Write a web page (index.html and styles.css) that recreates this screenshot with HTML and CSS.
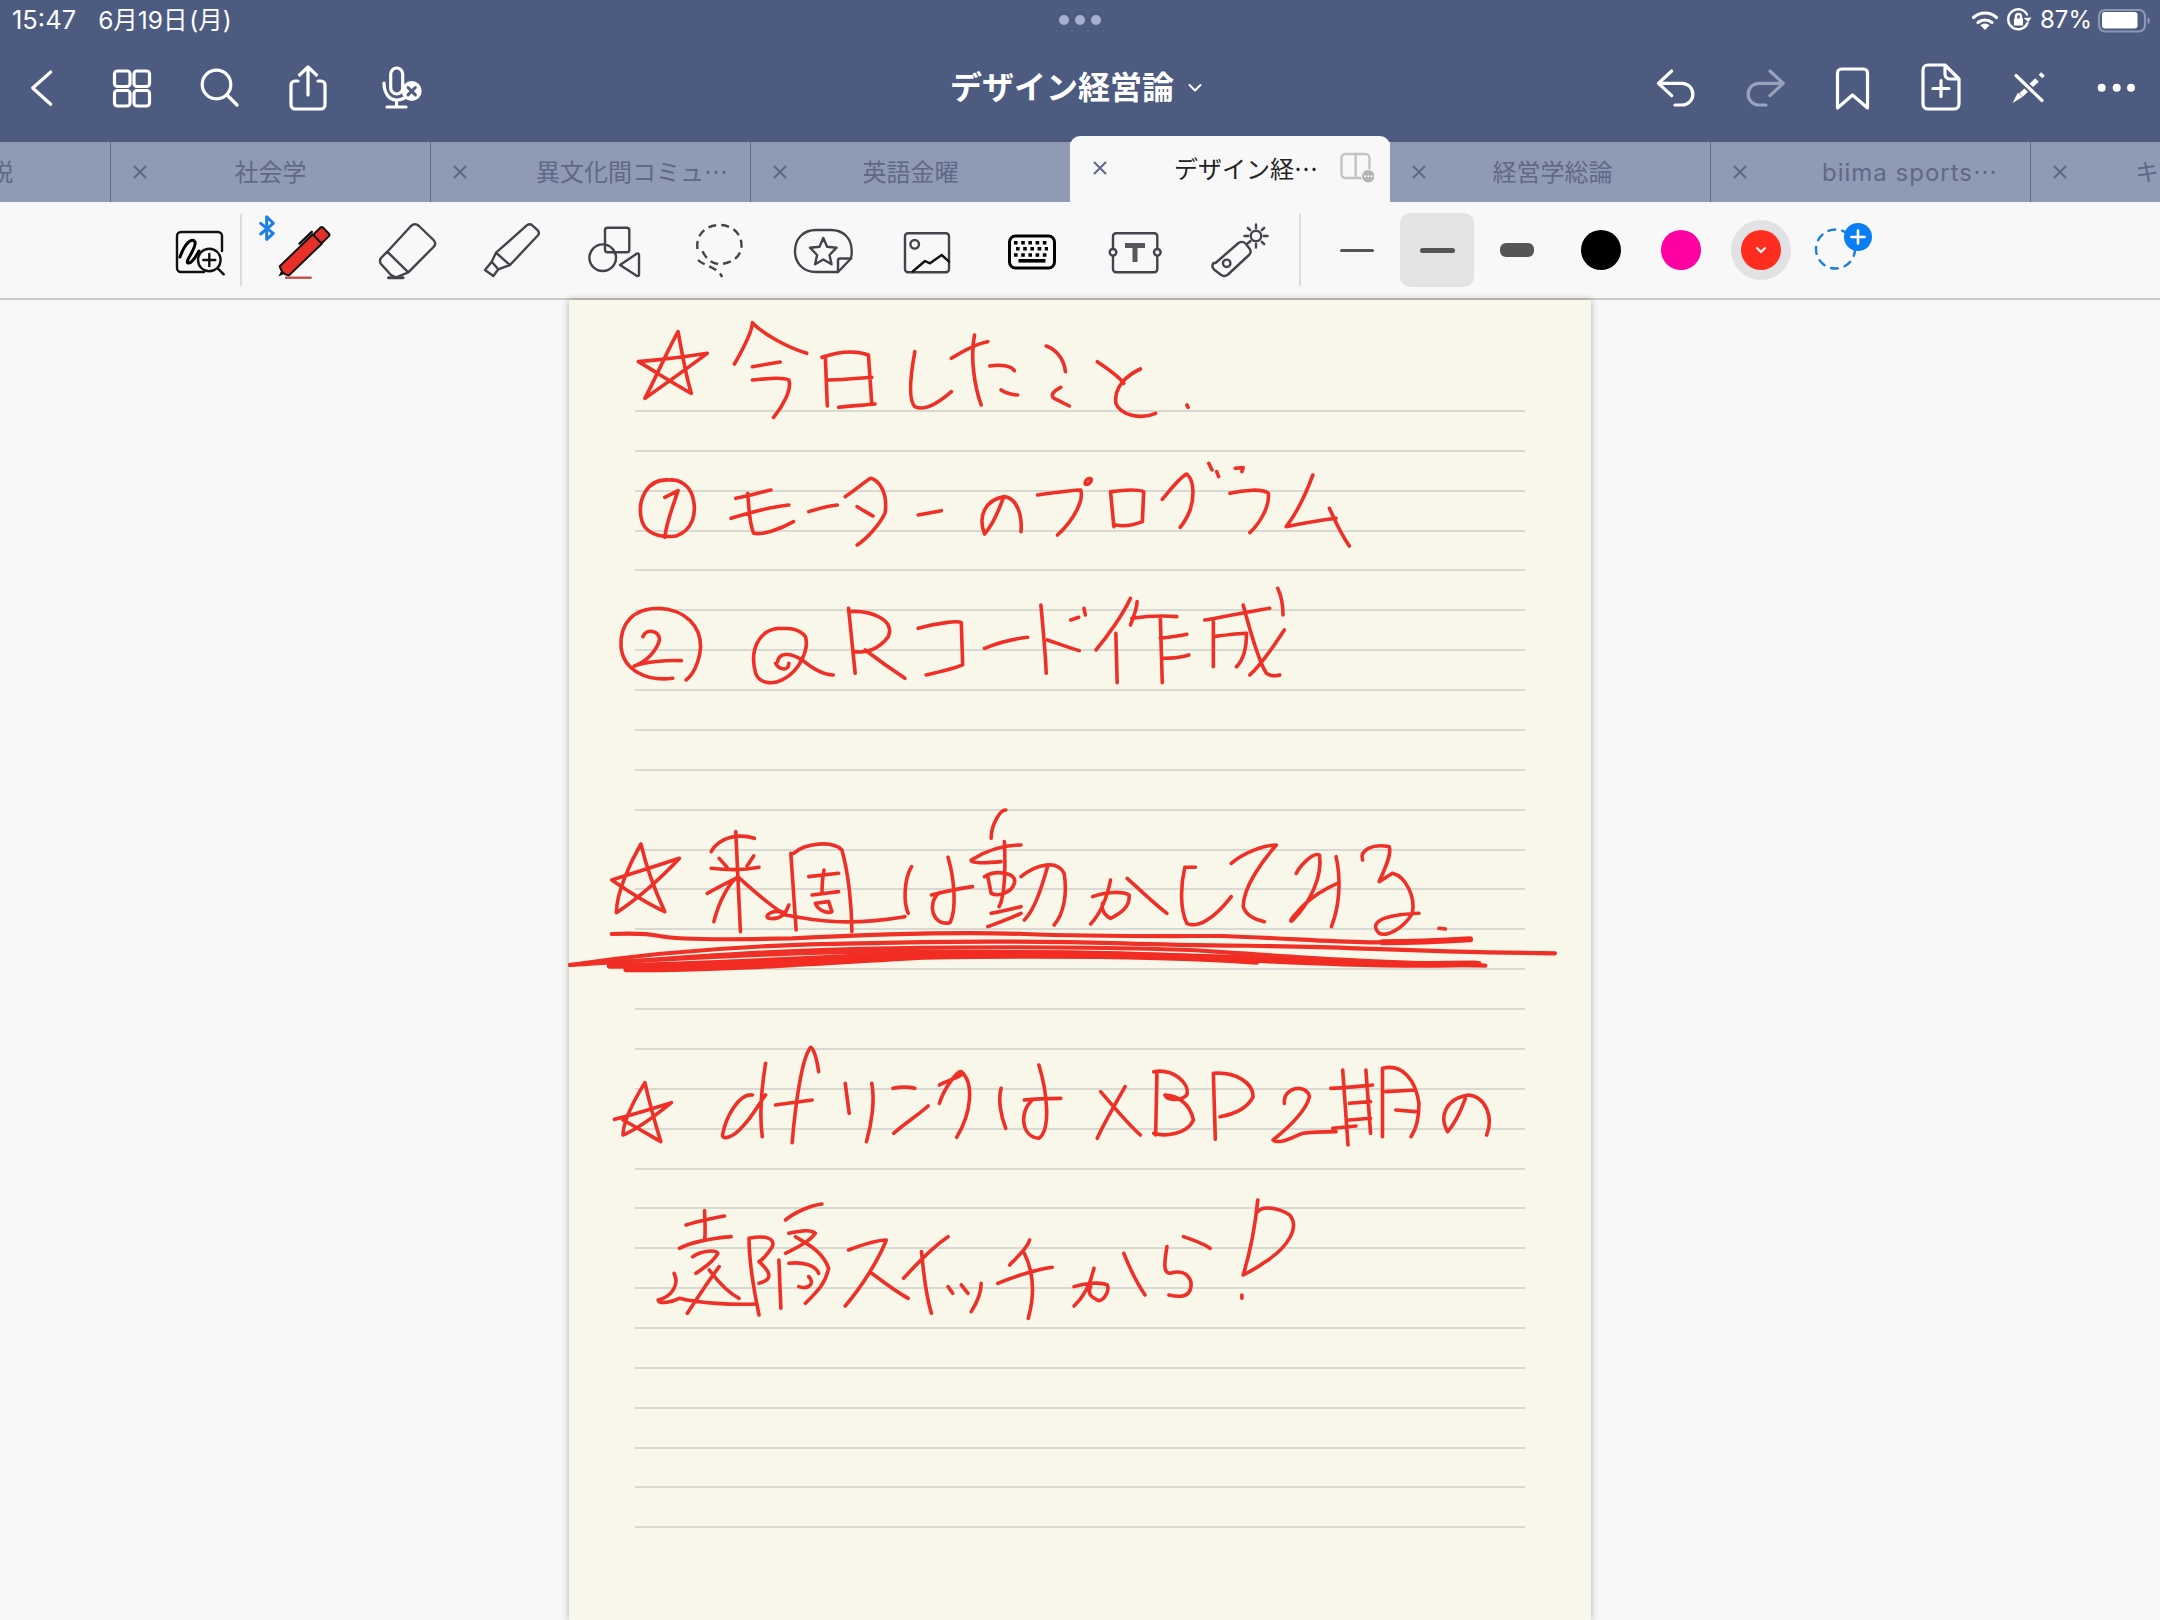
FILE: index.html
```html
<!DOCTYPE html>
<html lang="ja">
<head>
<meta charset="utf-8">
<title>デザイン経営論</title>
<link rel="stylesheet" href="styles.css">
</head>
<body>
<div class="app">
  <header class="header">
    <div class="status">
      <div class="status-left"><span>15:47</span><span class="date">6月19日 (月)</span></div>
      <div class="handle"><i></i><i></i><i></i></div>
      <div class="status-right">
        <svg class="ico" width="190" height="40" viewBox="1970 0 190 40">
          <path d="M1973.5 17.5a17 17 0 0 1 23 0M1978 22.5a11 11 0 0 1 14 0"/>
          <path class="solid" d="M1985 30l-4.600-4.800a7 7 0 0 1 9.200 0z"/>
          <path class="thin" d="M2027.500 23a10 10 0 1 1-.5-8.500"/>
          <path class="solid" d="M2023.500 18l5 4 3-4.500zM2014 18.500h9v7h-9z"/>
          <path class="thin" d="M2016 18.500v-2a2.500 2.500 0 0 1 5 0v2"/>
          <rect class="batt" x="2099" y="10" width="46" height="21.500" rx="6"/>
          <rect class="solid" x="2102" y="12" width="35.500" height="16.500" rx="3"/>
          <path class="batt-tail" d="M2147.500 17v7a4 4 0 0 0 2.500-3.500 4 4 0 0 0-2.500-3.500z"/>
        </svg>
        <span class="pct">87%</span>
      </div>
    </div>
    <nav class="nav">
      <div class="nav-group">
        <svg class="ico" width="86" height="96" viewBox="0 40 86 96"><path d="M50.700 72L32.700 88l18 16.300"/></svg>
        <svg class="ico" width="90" height="96" viewBox="86 40 90 96"><rect x="114.500" y="71" width="15.500" height="15.500" rx="3"/><rect x="134" y="71" width="15.500" height="15.500" rx="3"/><rect x="114.500" y="90.500" width="15.500" height="15.500" rx="3"/><rect x="134" y="90.500" width="15.500" height="15.500" rx="3"/></svg>
        <svg class="ico" width="90" height="96" viewBox="176 40 90 96"><circle cx="216.500" cy="84.500" r="14.300"/><path d="M227 95l10 10"/></svg>
        <svg class="ico" width="90" height="96" viewBox="266 40 90 96"><path d="M298 81h-3a4 4 0 0 0-4 4v20a4 4 0 0 0 4 4h26a4 4 0 0 0 4-4V85a4 4 0 0 0-4-4h-3M308 95V68M299.500 75l8.500-8 8.500 8"/></svg>
        <svg class="ico" width="90" height="96" viewBox="356 40 90 96"><rect x="390.700" y="68" width="12" height="26" rx="6"/><path d="M384 83c0 10 5 17 12.500 17s10-3 12-6M396.500 100v7M387 107h19"/><circle class="solid" cx="411.700" cy="91" r="10"/><path class="cut" d="M408 87.500l7.400 7.400M415.400 87.500l-7.400 7.400"/></svg>
      </div>
      <h1 class="title">デザイン経営論<svg class="ico chev" width="14" height="10" viewBox="0 0 14 10"><path d="M1.500 2l5.500 5.500L12.500 2"/></svg></h1>
      <div class="nav-group">
        <svg class="ico" width="88" height="96" viewBox="1632 40 88 96"><path d="M1671.700 71l-13.300 12.300 13.300 12.400M1660 83.300h22a10.800 10.800 0 0 1 0 21.700h-7"/></svg>
        <svg class="ico off" width="88" height="96" viewBox="1720 40 88 96"><path d="M1770 71l13.300 12.300-13.300 12.400M1781 83.300h-22a10.800 10.800 0 0 0 0 21.700h7"/></svg>
        <svg class="ico" width="88" height="96" viewBox="1808 40 88 96"><path d="M1837.500 108V73a4 4 0 0 1 4-4h22a4 4 0 0 1 4 4v35l-15-13z"/></svg>
        <svg class="ico" width="88" height="96" viewBox="1896 40 88 96"><path d="M1945 65h-17a5 5 0 0 0-5 5v34a5 5 0 0 0 5 5h26a5 5 0 0 0 5-5V79zM1945 65v9a5 5 0 0 0 5 5h9M1941 80.500v16M1933 88.500h16"/></svg>
        <svg class="ico" width="88" height="96" viewBox="1984 40 88 96"><path class="heavy" d="M2043 74l-2.500 2.500M2037 80l-16 15"/><path class="solid" d="M2018 92.500l4.500 4.500-10 6z"/><path class="gap" d="M2016 75.500l26 25"/><path d="M2016 75.500l26 25"/></svg>
        <svg class="ico" width="88" height="96" viewBox="2072 40 88 96"><circle class="solid" cx="2101.700" cy="87.700" r="4"/><circle class="solid" cx="2116.700" cy="87.700" r="4"/><circle class="solid" cx="2131" cy="87.700" r="4"/></svg>
      </div>
    </nav>
  </header>

  <div class="tabs">
    <div class="tab tab-first"><svg class="x" width="16" height="16" viewBox="0 0 16 16"><path d="M2 2l12 12M14 2L2 14"/></svg><span class="label">説</span></div>
    <div class="tab"><svg class="x" width="16" height="16" viewBox="0 0 16 16"><path d="M2 2l12 12M14 2L2 14"/></svg><span class="label">社会学</span></div>
    <div class="tab tab-long tab-cjk"><svg class="x" width="16" height="16" viewBox="0 0 16 16"><path d="M2 2l12 12M14 2L2 14"/></svg><span class="label">異文化間コミュ<span class="more">…</span></span></div>
    <div class="tab"><svg class="x" width="16" height="16" viewBox="0 0 16 16"><path d="M2 2l12 12M14 2L2 14"/></svg><span class="label">英語金曜</span></div>
    <div class="tab tab-active"><svg class="x" width="16" height="16" viewBox="0 0 16 16"><path d="M2 2l12 12M14 2L2 14"/></svg><span class="label">デザイン経<span class="more">…</span></span>
      <svg class="split" width="34" height="32" viewBox="1340 153 34 32"><rect x="1341.500" y="156" width="28" height="24" rx="4"/><path d="M1355.700 156v24"/><circle cx="1368.300" cy="178.300" r="6.700"/><path class="split-dots" d="M1365 178.300h.1M1368.300 178.300h.1M1371.600 178.300h.1"/></svg>
    </div>
    <div class="tab tab-nudge"><svg class="x" width="16" height="16" viewBox="0 0 16 16"><path d="M2 2l12 12M14 2L2 14"/></svg><span class="label">経営学総論</span></div>
    <div class="tab tab-long"><svg class="x" width="16" height="16" viewBox="0 0 16 16"><path d="M2 2l12 12M14 2L2 14"/></svg><span class="label latin">biima sports<span class="more">…</span></span></div>
    <div class="tab tab-last"><svg class="x" width="16" height="16" viewBox="0 0 16 16"><path d="M2 2l12 12M14 2L2 14"/></svg><span class="label">キ</span></div>
  </div>

  <div class="tools">
    <svg class="tool" width="80" height="96" viewBox="160 202 80 96">
      <path class="k" d="M204 272h-23a4 4 0 0 1-4-4v-32a4 4 0 0 1 4-4h37a4 4 0 0 1 4 4v15"/>
      <path class="k3" d="M180 257c5-14 12-20 15-15 2 6-11 20-7 21 4 1 8-7 11-12"/>
      <circle class="k" cx="209.300" cy="260" r="11.300"/>
      <path class="k" d="M209.300 254v12M203.300 260h12M217.700 268.300l6 6"/>
    </svg>
    <span class="sep sep-a"></span>
    <svg class="tool" width="104" height="96" viewBox="251 202 104 96">
      <path class="bt" d="M260.700 223.300l12.600 10-6.600 6V216.700l6.600 6.600-12.600 10.700"/>
      <g transform="translate(278.500 276.500) rotate(-44)">
        <path class="blk" d="M0 0l8-3v6z"/>
        <path class="pen" d="M8-6.500h46v13H8q-4-6.500 0-13z"/>
        <rect class="pen" x="54" y="-6" width="12" height="12" rx="2"/>
        <path class="k" d="M38-9h17"/>
      </g>
      <path class="under" d="M285 277.700h26.700"/>
    </svg>
    <svg class="tool" width="104" height="96" viewBox="355 202 104 96">
      <path class="g" d="M387.300 251.700L411 226q4-3.500 8 0l14.500 14q3.500 3.500 0 7l-25.200 25.300zM387.300 251.700l-6.300 6.300q-2 3 0 6l10 11q3 2.500 6 2l11.300-4.700"/>
      <path class="g3" d="M388.500 277.800h14.500"/>
    </svg>
    <svg class="tool" width="104" height="96" viewBox="459 202 104 96">
      <path class="g" d="M496 252.700l31-27.500q3-2 5 0l5.500 5q2.500 2.500 .5 5L510 265zM496 252.700l-4.300 9 6.600 7.600 11.700-4.300M491.700 261.700l-6.700 8.300 8.300 6 5-6.700"/>
    </svg>
    <svg class="tool" width="104" height="96" viewBox="563 202 104 96">
      <rect class="g" x="605" y="227.700" width="24.300" height="24.600" rx="2.500"/>
      <circle class="g" cx="602.700" cy="257.700" r="13.300"/>
      <path class="g" d="M620 265l17-11.500q2-.5 2 1.500v19.500q0 2-2 1.500z"/>
    </svg>
    <svg class="tool" width="104" height="96" viewBox="667 202 104 96">
      <path class="g dash" d="M697.500 249c-2-14 8-24 22-24 14 0 22 10 22 20 0 12-10 18-20 19-8 .5-15-4-19-13M698 260c4 4 12 6 18 10 2 2 5 4 6 7"/>
    </svg>
    <svg class="tool" width="104" height="96" viewBox="771 202 104 96">
      <path class="g" d="M838 272h-22c-13 0-21-9-21-21s8-21 21-21h15c13 0 20.700 9 20.700 21 0 3-.2 5-.7 7.500z"/>
      <path class="g" d="M851 258.500h-11q-2 0-2 2V272"/>
      <path class="g" d="M823.300 238l3.800 8.700 9.500 1-7.100 7.300 2 9.300-8.200-4.800-8.200 4.800 2-9.300-7.100-7.300 9.500-1z"/>
    </svg>
    <svg class="tool" width="104" height="96" viewBox="875 202 104 96">
      <rect class="g" x="905" y="233.300" width="44" height="39" rx="3"/>
      <circle class="g" cx="914.700" cy="244.300" r="4.300"/>
      <path class="k" d="M912.700 271.500l12.300-10.500 5 2.300 11.700-8.300 7.300 6.700"/>
    </svg>
    <svg class="tool" width="104" height="96" viewBox="979 202 104 96">
      <rect class="k3" x="1009.500" y="236" width="45" height="32" rx="6"/>
      <path class="keys" d="M1014 242.700h36M1016 248.800h32M1014 255h36"/>
      <path class="k3b" d="M1018.500 260.800h27"/>
    </svg>
    <svg class="tool" width="104" height="96" viewBox="1083 202 104 96">
      <path class="g" d="M1113 248v-11.700a3 3 0 0 1 3-3h38.300a3 3 0 0 1 3 3V248M1113 256.500v12.800a3 3 0 0 0 3 3h38.300a3 3 0 0 0 3-3v-12.800"/>
      <circle class="g" cx="1113" cy="252.300" r="3.300"/>
      <circle class="g" cx="1157.300" cy="252.300" r="3.300"/>
      <path class="t" d="M1125 245.500h20M1135 245.500V262"/>
    </svg>
    <svg class="tool" width="104" height="96" viewBox="1187 202 104 96">
      <path class="g" d="M1215.500 263l23-20q4-2.500 7 .5l4 5q2.500 3.500-.5 6.500l-21 19.500q-4 3-7.500 0l-6.500-5q-3-3-.5-6.500z"/>
      <circle class="g" cx="1226.700" cy="263.300" r="3.700"/>
      <path class="g" d="M1247.500 243.500l3-2.500"/>
      <circle class="g" cx="1256" cy="236" r="5.300"/>
      <path class="g" d="M1256 224.500v3.500M1256 244v3.500M1244.500 236h3.500M1264 236h3.500M1247.800 227.800l2.400 2.400M1261.800 241.800l2.400 2.400M1264.200 227.800l-2.400 2.400"/>
    </svg>
    <span class="sep sep-b"></span>
    <div class="size"><span class="bar bar-s"></span></div>
    <div class="size size-on"><span class="bar bar-m"></span></div>
    <div class="size"><span class="bar bar-l"></span></div>
    <div class="swatch swatch-first"><span class="dot dot-black"></span></div>
    <div class="swatch"><span class="dot dot-pink"></span></div>
    <div class="swatch"><span class="dot dot-red"><svg class="ico-chev" width="12" height="8" viewBox="0 0 12 8"><path d="M2 2l4 4 4-4"/></svg></span></div>
    <svg class="tool" width="80" height="96" viewBox="1801 202 80 96">
      <circle class="add-ring" cx="1835.500" cy="249" r="19.500"/>
      <circle class="add-badge" cx="1858" cy="237" r="14"/>
      <path class="add-plus" d="M1858 230.500v13M1851.500 237h13"/>
    </svg>
  </div>

  <main class="canvas">
    <section class="paper">
      <div class="rules"></div>
      <svg class="ink" width="1022" height="1320" viewBox="569 300 1022 1320">
        <g transform="translate(560 300) scale(.6633 .3333)">
          <path d="M128 295C145 230 165 140 178 95C183 150 190 230 198 280C170 250 140 210 118 185C150 180 190 170 222 160C195 200 160 250 128 295"/>
          <path d="M263 192C275 150 290 95 290 68C305 100 340 140 372 160M290 200C305 195 320 190 332 186M290 240C305 238 335 228 345 240C350 270 335 320 322 352"/>
          <path d="M400 170L403 318M395 172C420 155 445 150 465 165L470 312M405 240C425 240 450 235 470 232M420 322C440 318 460 315 475 312"/>
          <path d="M535 155C528 230 525 300 535 320C550 335 570 310 590 275M590 175C610 150 630 130 645 125M625 105C618 170 625 260 635 315M648 198C665 192 680 198 685 212M665 270C672 280 685 285 690 285"/>
          <path d="M733 138C750 150 760 180 762 215M755 262C745 272 738 285 745 295L768 318M810 185C825 205 845 235 850 250M875 207C855 225 835 260 838 310C845 345 875 360 898 340M945 315L947 322"/>
          <path d="M165 540C130 535 118 600 122 650C125 700 150 715 175 708C200 690 207 640 200 590C195 555 180 538 165 540M158 592C165 585 172 578 178 572C170 620 160 670 158 712"/>
          <path d="M265 595C290 585 305 575 318 570M258 655C280 640 320 620 345 615M283 580C285 620 285 670 292 700C305 705 330 690 352 665M375 635C390 625 405 618 418 615"/>
          <path d="M430 590C445 570 460 545 468 535C480 540 495 575 490 640C480 680 460 720 448 735M448 620C455 630 465 640 472 648M540 645L575 632"/>
          <path d="M640 702C630 650 640 600 670 590C690 595 697 650 695 695M668 595C660 640 650 680 640 702M720 585C745 578 775 570 785 570C790 600 775 660 750 705M792 552C790 535 805 530 800 545C798 552 794 555 792 552"/>
          <path d="M830 575L835 680M832 575C850 570 870 568 880 575L878 665M838 675C850 680 865 675 878 665"/>
          <path d="M908 598C920 570 935 530 945 522C958 545 955 600 950 630C945 655 940 670 935 682M978 490L983 510M990 515L993 530M1018 505L1030 503L1028 515M1010 580C1030 570 1060 565 1068 580C1070 620 1055 670 1040 698"/>
          <path d="M1135 525C1125 580 1110 640 1095 680C1120 670 1150 660 1170 655M1160 625C1170 670 1180 710 1190 738"/>
          <path d="M150 925C110 925 90 970 92 1040C95 1110 130 1145 170 1135M150 925C190 930 212 980 212 1040C210 1090 200 1125 190 1140M125 1010C130 985 150 990 150 1020C145 1055 130 1085 112 1098C130 1085 160 1080 183 1082"/>
          <path d="M330 985C300 990 285 1050 295 1120C300 1150 320 1155 335 1140C365 1110 375 1040 370 1010C360 985 345 985 330 985M328 1085C330 1060 345 1055 365 1080C380 1105 395 1125 412 1125M325 1090C330 1110 345 1115 345 1090"/>
          <path d="M435 925L445 1120M435 935C470 930 505 960 495 1010C480 1050 460 1060 445 1055M460 1050C480 1080 505 1115 520 1135"/>
          <path d="M540 985C570 968 600 962 605 968L607 1090M552 1125C575 1115 595 1105 607 1095M640 1045C665 1025 690 1015 705 1012"/>
          <path d="M725 915C728 980 732 1060 733 1120M735 1020C750 1030 770 1045 783 1052M770 960L782 952M790 925L792 945"/>
          <path d="M860 895C850 940 825 1010 808 1050M838 1000L840 1148M870 905C870 925 865 950 860 975M862 955C880 950 900 945 930 950M905 950L908 1148M905 1015C925 1010 940 1005 945 1003M910 1075C925 1075 940 1070 948 1065"/>
          <path d="M972 960C1000 950 1040 935 1070 925M1030 915C1040 990 1055 1090 1065 1120C1072 1130 1080 1128 1085 1125M985 965L985 1100M985 1010C1005 1005 1025 1000 1035 1000C1035 1040 1030 1080 1020 1100M1092 990C1075 1040 1060 1090 1040 1125M1082 865C1088 890 1090 920 1090 945"/>
        </g>
        <g transform="translate(560 780) scale(.6633 .3333)">
          <path d="M85 398C85 340 105 250 122 192C130 260 145 340 158 395C130 370 100 330 78 300C110 280 150 255 180 235C155 290 115 360 85 398"/>
          <path d="M228 215C240 170 270 160 293 175M265 155L272 455M228 265C250 270 280 270 300 262M232 425C240 360 255 310 268 290M222 340C240 320 255 305 265 295M268 290C290 330 320 380 340 405C380 420 430 440 520 410M240 235L252 262M292 228L282 258"/>
          <path d="M348 220L356 450M352 220C370 190 410 180 425 210C435 280 440 380 440 455M375 290L420 280M398 270C395 300 395 320 395 340M380 345L420 335M385 370C390 395 405 400 410 395L405 365L385 370M340 400C325 385 305 405 315 415C330 420 340 405 345 375"/>
          <path d="M530 260C518 300 518 370 525 400M560 345C580 335 600 325 622 320M585 232C595 300 598 390 588 428C562 440 552 370 572 338"/>
          <path d="M672 90C665 88 650 130 650 175M620 240C640 215 665 195 695 195M670 185C672 280 670 350 662 380M620 240C618 250 640 250 665 245M640 290C655 270 690 275 685 310C680 340 660 350 650 340L645 290M650 400C665 395 685 385 695 380M645 440C665 425 685 410 695 400M695 290C720 250 750 240 760 280C765 340 760 400 745 435M735 260C725 330 715 390 700 420"/>
          <path d="M803 350C815 340 845 330 858 345C860 380 845 400 830 415C825 410 815 395 818 370M830 300C825 350 815 400 800 432M855 295C875 330 895 370 915 400"/>
          <path d="M958 262L942 262C935 320 935 390 945 430C960 445 985 420 1012 350M1012 250C1030 220 1060 195 1080 195C1060 240 1030 320 1030 380C1035 410 1050 420 1062 425"/>
          <path d="M1110 280C1115 260 1135 215 1145 225C1150 290 1130 370 1105 420C1100 430 1100 420 1110 400C1130 350 1160 320 1172 310M1170 230C1178 300 1175 380 1163 440"/>
          <path d="M1210 240C1205 210 1225 190 1250 200C1255 225 1240 280 1235 305L1255 280C1275 290 1290 350 1285 400C1270 450 1245 470 1235 460C1220 430 1235 405 1295 400M1325 445L1335 447"/>
          <path class="u" d="M78 462C100 460 130 460 150 468C180 480 250 480 350 475C450 465 600 455 700 462C800 470 900 468 1000 468C1100 475 1150 485 1220 487C1280 488 1340 480 1372 478"/>
          <path class="uu" d="M1240 487C1290 487 1340 482 1372 478"/>
          <path class="u" d="M15 555C100 530 250 495 450 490C600 482 750 485 850 490C1000 500 1100 495 1200 505C1300 512 1400 518 1500 520"/>
          <path class="u" d="M15 555C150 540 300 510 500 505C650 500 800 500 950 510C1100 530 1200 545 1395 557"/>
          <path class="u" d="M90 545C250 530 400 510 560 515C700 515 850 520 1000 530C1100 535 1200 555 1380 548"/>
          <path class="uu" d="M75 557C200 560 400 530 550 522C700 515 850 520 1000 535C1100 545 1250 560 1385 552"/>
          <path class="uu" d="M100 568C250 570 400 545 550 530C700 525 900 525 1050 545"/>
        </g>
        <g transform="translate(560 1020) scale(.6633 .3333)">
          <path d="M82 298C110 285 140 265 168 248C145 285 115 330 95 345C95 300 115 230 128 188C135 250 145 320 152 365C130 340 105 310 95 300"/>
          <path d="M310 130C305 190 300 280 305 350M290 225C270 220 250 290 245 345C245 360 260 355 275 320C290 290 300 250 310 225M350 368C355 250 365 110 378 82C385 90 388 130 390 155M325 255C340 250 365 245 380 240"/>
          <path d="M430 190L436 280M470 190C475 240 470 310 462 365M502 205C515 200 525 200 535 205M503 340C520 310 540 285 555 258M572 250C580 200 600 150 605 155C625 190 620 280 598 352M572 195C585 180 600 175 608 160"/>
          <path d="M665 205C660 240 665 290 672 325M700 240C720 235 740 235 755 235M722 135C735 220 740 330 722 355C695 350 692 275 712 240"/>
          <path d="M852 200C835 260 820 310 810 355M815 215C835 260 855 310 875 345"/>
          <path d="M900 155L898 345M895 155C925 145 950 190 945 225C935 245 915 240 912 225C930 225 950 250 955 300C945 345 910 350 895 340M985 160L988 358M985 160C1020 155 1045 190 1045 230C1035 270 1010 285 995 290"/>
          <path d="M1092 250C1090 200 1125 190 1130 230C1125 270 1100 320 1075 360C1085 375 1105 350 1120 340C1135 335 1160 335 1170 335"/>
          <path d="M1162 205C1180 205 1200 200 1225 195M1180 150L1188 375M1215 150L1222 340M1190 250L1222 245M1190 300L1222 295M1165 325L1200 318M1240 145C1270 130 1290 180 1295 250C1295 300 1290 330 1283 350M1240 145L1240 350M1245 215L1290 210M1260 270L1290 275"/>
          <path d="M1338 335C1325 290 1335 235 1370 225C1395 230 1408 290 1397 345M1365 235C1355 290 1345 320 1338 335"/>
          <path d="M190 615C205 605 230 595 248 588M218 572C218 600 220 630 218 660M180 685C200 665 230 655 258 650M200 710C215 690 235 690 238 700C230 730 215 745 205 760M240 740C225 780 205 840 192 880M225 750C240 790 255 820 270 835M172 760C180 790 170 830 148 840C150 855 170 845 180 835C210 850 260 855 295 852"/>
          <path d="M285 655C310 645 325 655 320 680C310 710 305 720 300 725C320 760 320 780 300 790M285 655C285 750 295 830 300 885M340 600C355 575 380 555 395 552M345 640C365 630 380 630 385 640C375 670 350 690 340 700M355 650C370 670 395 690 405 745C400 790 390 810 370 850M330 720L333 865M345 730C365 725 385 735 390 760M360 800C375 810 385 790 375 770"/>
          <path d="M435 690C455 675 480 660 492 660C480 720 455 800 430 858M470 760C490 790 510 820 525 835M585 650C555 690 535 740 518 775M545 695C548 760 552 830 560 880"/>
          <path d="M585 800L592 820M605 795L615 820M635 790C635 820 628 850 620 875M678 735C695 700 705 680 708 660M660 790C685 770 715 750 742 742M700 700C715 760 715 830 706 895"/>
          <path d="M775 800C790 790 815 785 825 795C830 820 815 850 810 840C800 830 795 820 800 800M805 745C800 790 790 830 775 858M850 700C860 750 870 790 882 825"/>
          <path d="M940 650C955 660 970 670 980 685M915 680C912 720 908 760 920 760C945 745 955 780 950 810C945 835 930 830 918 825"/>
          <path d="M1052 540C1048 620 1040 700 1030 765M1052 575C1060 555 1085 565 1100 585C1115 620 1100 680 1060 730C1050 745 1040 755 1030 765M1028 825L1028 835"/>
        </g>
      </svg>
    </section>
  </main>
</div>
</body>
</html>
```

FILE: styles.css
```css
* { box-sizing: border-box; }
html, body { margin: 0; padding: 0; }
body {
  width: 2160px;
  height: 1620px;
  overflow: hidden;
  font-family: Inter, "Noto Sans CJK JP", sans-serif;
  background: #f7f7f7;
}
svg { display: block; flex: none; }
.app { display: flex; flex-direction: column; width: 2160px; height: 1620px; overflow: hidden; }

/* header */
.header { background: #4d5b80; height: 142px; color: #fff; flex: none; }
.status { display: grid; grid-template-columns: 1fr auto 1fr; align-items: center; height: 40px; }
.status-left { display: flex; align-items: center; gap: 22px; height: 40px; padding-left: 12px; font-size: 25.5px; line-height: 40px; }
.status-left span { display: block; height: 40px; }
.status-left .date { font-size: 24.5px; word-spacing: -5px; }
.handle { display: flex; gap: 6px; }
.handle i { width: 10px; height: 10px; border-radius: 50%; background: #a5b0d3; }
.status-right { display: grid; justify-items: end; }
.status-right > * { grid-area: 1 / 1; }
.pct { font-size: 24px; line-height: 40px; margin-right: 68px; }
.ico { fill: none; stroke: #fff; stroke-width: 3.2; stroke-linecap: round; stroke-linejoin: round; }
.ico .solid { fill: #fff; stroke: none; }
.ico .thin { stroke-width: 2.4; }
.ico .heavy { stroke-width: 5; stroke-linecap: butt; }
.ico .gap { stroke: #4d5b80; stroke-width: 7; }
.ico .cut { stroke: #4d5b80; stroke-width: 3; }
.ico .batt { stroke: #8d97b5; stroke-width: 2.2; }
.ico .batt-tail { fill: #8d97b5; stroke: none; }
.ico.off { stroke: #98a2bc; }
.nav { display: grid; grid-template-columns: 1fr auto 1fr; align-items: center; height: 96px; }
.nav-group { display: flex; }
.nav-group:last-child { justify-content: flex-end; }
.title { display: flex; align-items: center; gap: 14px; margin: 0 8px 0 0; font-size: 32px; font-weight: 600; line-height: 1; }
.chev { stroke-width: 2; }

/* tabs */
.tabs { display: flex; height: 60px; margin-left: -210px; flex: none; align-items: flex-end; position: relative; }
.tab {
  display: grid;
  align-items: center;
  flex: none;
  width: 320px;
  height: 60px;
  padding-bottom: 3px;
  background: #8f9ab5;
  border-left: 1px solid #5d6988;
  color: #5f6985;
  font-size: 24px;
}
.tab > * { grid-area: 1 / 1; }
.x { justify-self: start; margin-left: 21px; margin-top: 3px; fill: none; stroke: #5f6985; stroke-width: 2; }
.label { justify-self: center; white-space: nowrap; }
.more { font-family: "Noto Sans CJK JP", sans-serif; }
.latin { letter-spacing: 1px; }
.latin .more { letter-spacing: 0; }
.tab-first .label { justify-self: end; padding-right: 97px; }
.tab-last .label { justify-self: start; padding-left: 104px; }
.tab-long .label { justify-self: end; padding-right: 33px; }
.tab-cjk .label { padding-right: 22px; }
.tab-nudge .label { padding-left: 5px; }
.tab-active {
  height: 66px;
  background: #f8f8f8;
  border-left: 0;
  border-radius: 10px 10px 0 0;
  color: #222;
  padding-bottom: 4px;
}
.tab-active + .tab { border-left: 0; }
.tab-active .x { margin-left: 22px; margin-top: 2px; }
.tab-active .label { justify-self: end; padding-right: 72px; }
.split { justify-self: end; margin-right: 16px; fill: none; stroke: #c3c3c3; stroke-width: 2.4; }
.split circle { fill: #b4b4b4; stroke: #f8f8f8; stroke-width: 1; }
.split .split-dots { stroke: #fff; stroke-width: 2; stroke-linecap: round; }

/* tool bar */
.tools {
  display: flex;
  align-items: center;
  flex: none;
  height: 98px;
  padding-left: 160px;
  background: #f8f8f8;
  border-bottom: 2px solid #c9c9c2;
}
.tool { fill: none; stroke-linecap: round; stroke-linejoin: round; }
.sep { flex: none; width: 2px; height: 72px; background: #dcdcdc; }
.sep-a { margin-right: 9px; }
.sep-b { margin-left: 8px; margin-right: 16px; }
.k { stroke: #111; stroke-width: 2.4; fill: none; }
.k3 { stroke: #000; stroke-width: 3; fill: none; }
.k3b { stroke: #000; stroke-width: 3.6; stroke-linecap: butt; }
.keys { stroke: #000; stroke-width: 3.6; stroke-dasharray: 3.6 3.6; stroke-linecap: butt; }
.g { stroke: #41444b; stroke-width: 2.4; fill: none; }
.g3 { stroke: #41444b; stroke-width: 3; }
.dash { stroke-dasharray: 8 5; stroke-linecap: butt; }
.t { stroke: #55575c; stroke-width: 5; stroke-linecap: butt; }
.bt { stroke: #1b7fe6; stroke-width: 3; }
.blk { fill: #111; }
.pen { fill: #e8302a; stroke: #111; stroke-width: 2; }
.under { stroke: #c2504c; stroke-width: 2.4; stroke-linecap: butt; }
.size { display: flex; align-items: center; justify-content: center; flex: none; width: 80px; height: 74px; }
.size-on { width: 74px; margin: 0 3px; background: #e3e3e5; border-radius: 10px; }
.bar { display: block; background: #555; }
.bar-s { width: 34px; height: 3px; border-radius: 2px; }
.bar-m { width: 35px; height: 5px; border-radius: 3px; }
.bar-l { width: 34px; height: 14px; border-radius: 6px; }
.swatch { display: flex; align-items: center; justify-content: center; flex: none; width: 80px; }
.swatch-first { margin-left: 4px; }
.dot { display: flex; align-items: center; justify-content: center; width: 40px; height: 40px; border-radius: 50%; }
.dot-black { background: #000; }
.dot-pink { background: #ff00a2; }
.dot-red { background: #ff2d1f; box-shadow: 0 0 0 10px #e2e2e4; }
.ico-chev { fill: none; stroke: #fff; stroke-width: 2; stroke-linecap: round; }
.add-ring { stroke: #1b7fd6; stroke-width: 2.4; stroke-dasharray: 7 7; }
.add-badge { fill: #0a7ef5; }
.add-plus { stroke: #fff; stroke-width: 2.6; }

/* page */
.canvas { display: flex; justify-content: center; flex: 1; min-height: 0; background: #f7f7f7; }
.paper {
  position: relative;
  width: 1022px;
  background: #f9f6ea;
  box-shadow: 0 0 7px rgba(0, 0, 0, .3);
}
.rules {
  margin: 110px 66px 0;
  height: 1118px;
  background: repeating-linear-gradient(to bottom, #d9d9d4 0, #d9d9d4 2px, transparent 2px, transparent 39.87px);
}
.ink { position: absolute; left: 0; top: 0; overflow: visible; }
.ink path {
  fill: none;
  stroke: #ee3027;
  stroke-width: 3.6;
  stroke-linecap: round;
  stroke-linejoin: round;
  vector-effect: non-scaling-stroke;
}
.ink .u { stroke-width: 4.2; }
.ink .uu { stroke-width: 6; stroke: #f22c22; }
```
